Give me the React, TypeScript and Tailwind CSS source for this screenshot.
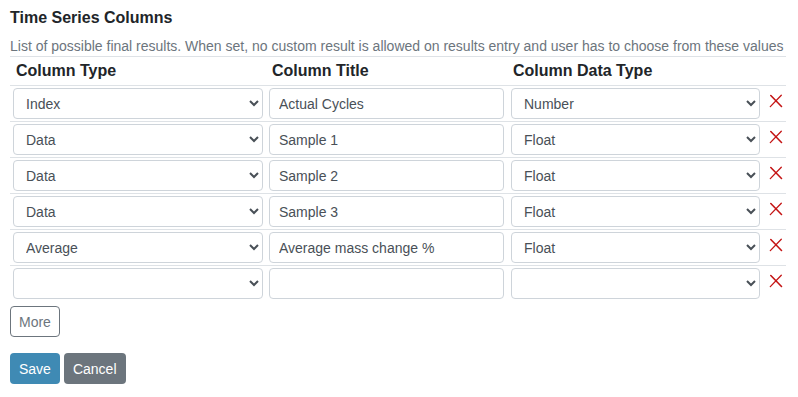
import React from 'react';

type Row = { kind: string; title: string; dataType: string };

const rows: Row[] = [
  { kind: 'Index', title: 'Actual Cycles', dataType: 'Number' },
  { kind: 'Data', title: 'Sample 1', dataType: 'Float' },
  { kind: 'Data', title: 'Sample 2', dataType: 'Float' },
  { kind: 'Data', title: 'Sample 3', dataType: 'Float' },
  { kind: 'Average', title: 'Average mass change %', dataType: 'Float' },
  { kind: '', title: '', dataType: '' },
];

const kinds = ['', 'Index', 'Data', 'Average'];
const dataTypes = ['', 'Number', 'Float', 'String'];

const fieldClass =
  'h-[31px] rounded-[4px] border border-[#ced4da] bg-white text-sm text-[#495057] outline-none';

function RemoveIcon() {
  return (
    <svg width="14" height="14" viewBox="0 0 14 14" className="text-[#c41414]">
      <path d="M1.8 1.5 L12.5 12.5" stroke="currentColor" strokeWidth="1.6" strokeLinecap="round" />
      <path d="M12.3 1.2 L1.3 12.6" stroke="currentColor" strokeWidth="1.3" strokeLinecap="round" />
    </svg>
  );
}

export default function App() {
  return (
    <div
      className="min-h-screen bg-white px-[10px] pt-[6px] text-[#212529]"
      style={{ fontFamily: '"Liberation Sans", Arial, sans-serif' }}
    >
      <h3 className="text-base font-bold leading-6">Time Series Columns</h3>
      <p className="mt-[6px] text-sm leading-5 text-[#6c757d]">
        List of possible final results. When set, no custom result is allowed on results entry and user has to
        choose from these values
      </p>

      <table className="w-[776px] table-fixed border-collapse">
        <colgroup>
          <col className="w-[256px]" />
          <col className="w-[241px]" />
          <col className="w-[258px]" />
          <col className="w-[21px]" />
        </colgroup>
        <thead>
          <tr className="border-y border-[#dee2e6]">
            <th className="px-[6px] py-[2px] text-left text-base font-bold leading-6">Column Type</th>
            <th className="px-[6px] py-[2px] text-left text-base font-bold leading-6">Column Title</th>
            <th className="px-[6px] py-[2px] text-left text-base font-bold leading-6">Column Data Type</th>
            <th />
          </tr>
        </thead>
        <tbody>
          {rows.map((r, i) => (
            <tr key={i} className={i < rows.length - 1 ? 'border-b border-[#dee2e6]' : ''}>
              <td className="px-[3px] py-[2px]">
                <select defaultValue={r.kind} className={`${fieldClass} w-[250px] pl-[8px]`}>
                  {kinds.map((k) => (
                    <option key={k} value={k}>
                      {k}
                    </option>
                  ))}
                </select>
              </td>
              <td className="px-[3px] py-[2px]">
                <input defaultValue={r.title} className={`${fieldClass} w-[235px] px-[9px]`} />
              </td>
              <td className="py-[2px] pl-[4px]">
                <select defaultValue={r.dataType} className={`${fieldClass} w-[249px] pl-[8px]`}>
                  {dataTypes.map((d) => (
                    <option key={d} value={d}>
                      {d}
                    </option>
                  ))}
                </select>
              </td>
              <td className="py-[2px] pl-[4px] align-top">
                <div className="pt-[6px]">
                  <RemoveIcon />
                </div>
              </td>
            </tr>
          ))}
        </tbody>
      </table>

      <button className="mt-[5px] h-[31px] rounded-[4px] border border-[#6c757d] bg-white px-[8px] text-sm text-[#6c757d]">
        More
      </button>

      <div className="mt-[16px] flex gap-[4px]">
        <button className="h-[31px] rounded-[4px] bg-[#3f8ab4] px-[9px] text-sm text-white">Save</button>
        <button className="h-[31px] rounded-[4px] bg-[#6c757d] px-[9px] text-sm text-white">Cancel</button>
      </div>
    </div>
  );
}
